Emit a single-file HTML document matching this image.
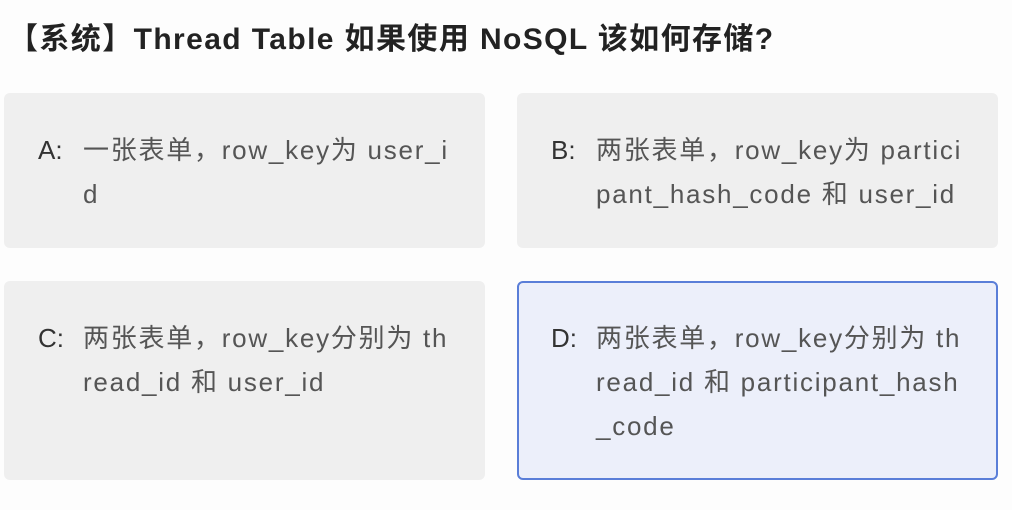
<!DOCTYPE html>
<html><head><meta charset="utf-8"><style>
body{margin:0;width:1012px;height:510px;background:#fdfdfd;font-family:"Liberation Sans","Noto Sans CJK SC",sans-serif;overflow:hidden;position:relative}
h1{position:absolute;left:8px;top:20px;margin:0;font-size:30px;font-weight:bold;color:#222;white-space:nowrap;line-height:40px;letter-spacing:1.4px}
.c{position:absolute;width:481px;background:#efefef;border-radius:6px;box-sizing:border-box}
.l{position:absolute;left:34px;top:35px;font-size:26px;color:#333;line-height:44px}
.t{position:absolute;left:79px;top:35px;font-size:26px;color:#555;line-height:44px;white-space:nowrap;letter-spacing:1.75px}
.d{background:#eceffa;border:2px solid #5a7ed8}
.d .l{left:32px;top:33px}.d .t{left:77px;top:33px}
</style></head><body>
<h1>【系统】Thread Table 如果使用 NoSQL 该如何存储?</h1>
<div class="c" style="left:4px;top:93px;height:155px"><div class="l">A:</div><div class="t">一张表单，row_key为 user_i<br>d</div></div>
<div class="c" style="left:517px;top:93px;height:155px"><div class="l">B:</div><div class="t">两张表单，row_key为 partici<br>pant_hash_code 和 user_id</div></div>
<div class="c" style="left:4px;top:281px;height:199px"><div class="l">C:</div><div class="t">两张表单，row_key分别为 th<br>read_id 和 user_id</div></div>
<div class="c d" style="left:517px;top:281px;height:199px"><div class="l">D:</div><div class="t">两张表单，row_key分别为 th<br>read_id 和 participant_hash<br>_code</div></div>
</body></html>
